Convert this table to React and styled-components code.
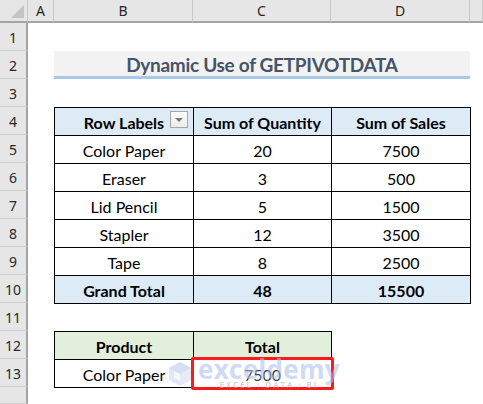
import styled, { createGlobalStyle } from 'styled-components';

const GlobalStyle = createGlobalStyle`
  html, body {
    margin: 0;
    padding: 0;
    background: #fff;
    overflow: hidden;
  }
`;

const Sheet = styled.div`
  position: relative;
  display: grid;
  grid-template-columns: 28px 26px 139px 138px 139px 1fr;
  grid-template-rows: 23px repeat(13, 28px) 1fr;
  width: 483px;
  height: 404px;
  font-family: Lato, 'Liberation Sans', sans-serif;
  color: #000;
`;

const Corner = styled.div`
  grid-column: 1;
  grid-row: 1;
  position: relative;
  background: #e6e6e6;
  border-right: 1px solid #c8c8c8;
  border-bottom: 2px solid #a5a5a5;
  &::after {
    content: '';
    position: absolute;
    right: 3px;
    bottom: 3px;
    border-style: solid;
    border-width: 0 0 13px 13px;
    border-color: transparent transparent #c4c4c4 transparent;
  }
`;

const ColHead = styled.div`
  grid-row: 1;
  grid-column: ${(p) => p.$col};
  display: flex;
  align-items: center;
  justify-content: center;
  background: #e6e6e6;
  border-right: 1px solid #c8c8c8;
  border-bottom: 2px solid #a5a5a5;
  font-family: 'Noto Sans', 'Liberation Sans', sans-serif;
  font-size: 14px;
  color: #262626;
`;

const RowHead = styled.div`
  grid-column: 1;
  grid-row: ${(p) => p.$row};
  display: flex;
  align-items: center;
  justify-content: center;
  background: #e6e6e6;
  border-right: 2px solid #a5a5a5;
  border-bottom: 1px solid #cfcfcf;
  font-family: 'Noto Sans', 'Liberation Sans', sans-serif;
  font-size: 14px;
  color: #262626;
  padding-top: 2px;
  box-sizing: border-box;
`;

const TitleBand = styled.div`
  grid-column: 3 / 6;
  grid-row: 3;
  display: flex;
  align-items: center;
  justify-content: center;
  background: #f2f2f2;
  border-bottom: 3px solid #a9c9e8;
  font-size: 19px;
  font-weight: 700;
  letter-spacing: -0.3px;
  color: #44546a;
  padding-top: 1px;
`;

const Table = styled.div`
  grid-column: 3 / span ${(p) => p.$span};
  grid-row: ${(p) => p.$row} / span ${(p) => p.$rows};
  align-self: start;
  justify-self: start;
  display: grid;
  grid-template-columns: ${(p) => p.$cols};
  grid-auto-rows: 27px;
  gap: 1px;
  background: #000;
  border: 1px solid #000;
`;

const Cell = styled.div`
  position: relative;
  display: flex;
  align-items: center;
  justify-content: center;
  background: ${(p) => p.$bg || '#fff'};
  font-size: 16px;
  font-weight: ${(p) => (p.$bold ? 700 : 400)};
  color: ${(p) => (p.$muted ? '#3a3a3a' : '#000')};
  padding-top: 1px;
`;

const Highlight = styled.div`
  position: absolute;
  inset: -3px;
  border: 3px solid #ff1a1a;
  border-radius: 2px;
  pointer-events: none;
`;

const FilterButton = styled.div`
  position: absolute;
  right: 5px;
  top: 3px;
  width: 16px;
  height: 15px;
  border: 1px solid #a6a6a6;
  background: linear-gradient(#fdfdfd, #ececec);
  display: flex;
  align-items: center;
  justify-content: center;
  &::after {
    content: '';
    border-style: solid;
    border-width: 4px 4px 0 4px;
    border-color: #7a7a7a transparent transparent transparent;
  }
`;

const Watermark = styled.div`
  position: absolute;
  left: 168px;
  top: 358px;
  display: flex;
  align-items: center;
  gap: 6px;
  opacity: 0.55;
  pointer-events: none;
`;

const MarkText = styled.div`
  display: flex;
  flex-direction: column;
  align-items: center;
`;

const MarkName = styled.span`
  font-family: 'Open Sans', sans-serif;
  font-size: 26px;
  font-weight: 700;
  line-height: 22px;
  color: #a7bdf1;
  letter-spacing: 0.3px;
`;

const MarkTag = styled.span`
  font-family: 'Open Sans', sans-serif;
  font-size: 8px;
  font-weight: 600;
  line-height: 10px;
  letter-spacing: 2px;
  color: #a8a8a8;
`;

const CUBE = (
  <svg width="24" height="26" viewBox="0 0 24 26">
    <path d="M12 1 L23 7 L23 19 L12 25 L1 19 L1 7 Z" fill="#c9d4ef" />
    <path d="M12 1 L23 7 L12 13 L1 7 Z" fill="#b7c6ee" />
    <path d="M12 13 L23 7 L23 19 L12 25 Z" fill="#d6dcea" />
    <path d="M6 10 L12 13 L12 20 L6 17 Z" fill="#ffffff" opacity="0.7" />
  </svg>
);

const pivotRows = [
  ['Color Paper', '20', '7500'],
  ['Eraser', '3', '500'],
  ['Lid Pencil', '5', '1500'],
  ['Stapler', '12', '3500'],
  ['Tape', '8', '2500'],
];

export default function App() {
  const blue = '#ddebf7';
  const green = '#e2efda';
  return (
    <>
      <GlobalStyle />
      <Sheet>
        <Corner />
        {['A', 'B', 'C', 'D', ''].map((c, i) => (
          <ColHead key={i} $col={i + 2}>
            {c}
          </ColHead>
        ))}
        {Array.from({ length: 14 }, (_, i) => (
          <RowHead key={i} $row={i + 2}>
            {i < 13 ? i + 1 : ''}
          </RowHead>
        ))}

        <TitleBand>Dynamic Use of GETPIVOTDATA</TitleBand>

        <Table $span={3} $row={5} $rows={7} $cols="138px 137px 138px">
          <Cell $bg={blue} $bold>
            Row Labels
            <FilterButton />
          </Cell>
          <Cell $bg={blue} $bold>
            Sum of Quantity
          </Cell>
          <Cell $bg={blue} $bold>
            Sum of Sales
          </Cell>
          {pivotRows.map((r) =>
            r.map((v, j) => <Cell key={r[0] + j}>{v}</Cell>)
          )}
          <Cell $bg={blue} $bold>
            Grand Total
          </Cell>
          <Cell $bg={blue} $bold>
            48
          </Cell>
          <Cell $bg={blue} $bold>
            15500
          </Cell>
        </Table>

        <Table $span={2} $row={13} $rows={2} $cols="138px 137px">
          <Cell $bg={green} $bold>
            Product
          </Cell>
          <Cell $bg={green} $bold>
            Total
          </Cell>
          <Cell>Color Paper</Cell>
          <Cell $muted>
            7500
            <Highlight />
          </Cell>
        </Table>

        <Watermark>
          {CUBE}
          <MarkText>
            <MarkName>exceldemy</MarkName>
            <MarkTag>EXCEL · DATA · BI</MarkTag>
          </MarkText>
        </Watermark>
      </Sheet>
    </>
  );
}
